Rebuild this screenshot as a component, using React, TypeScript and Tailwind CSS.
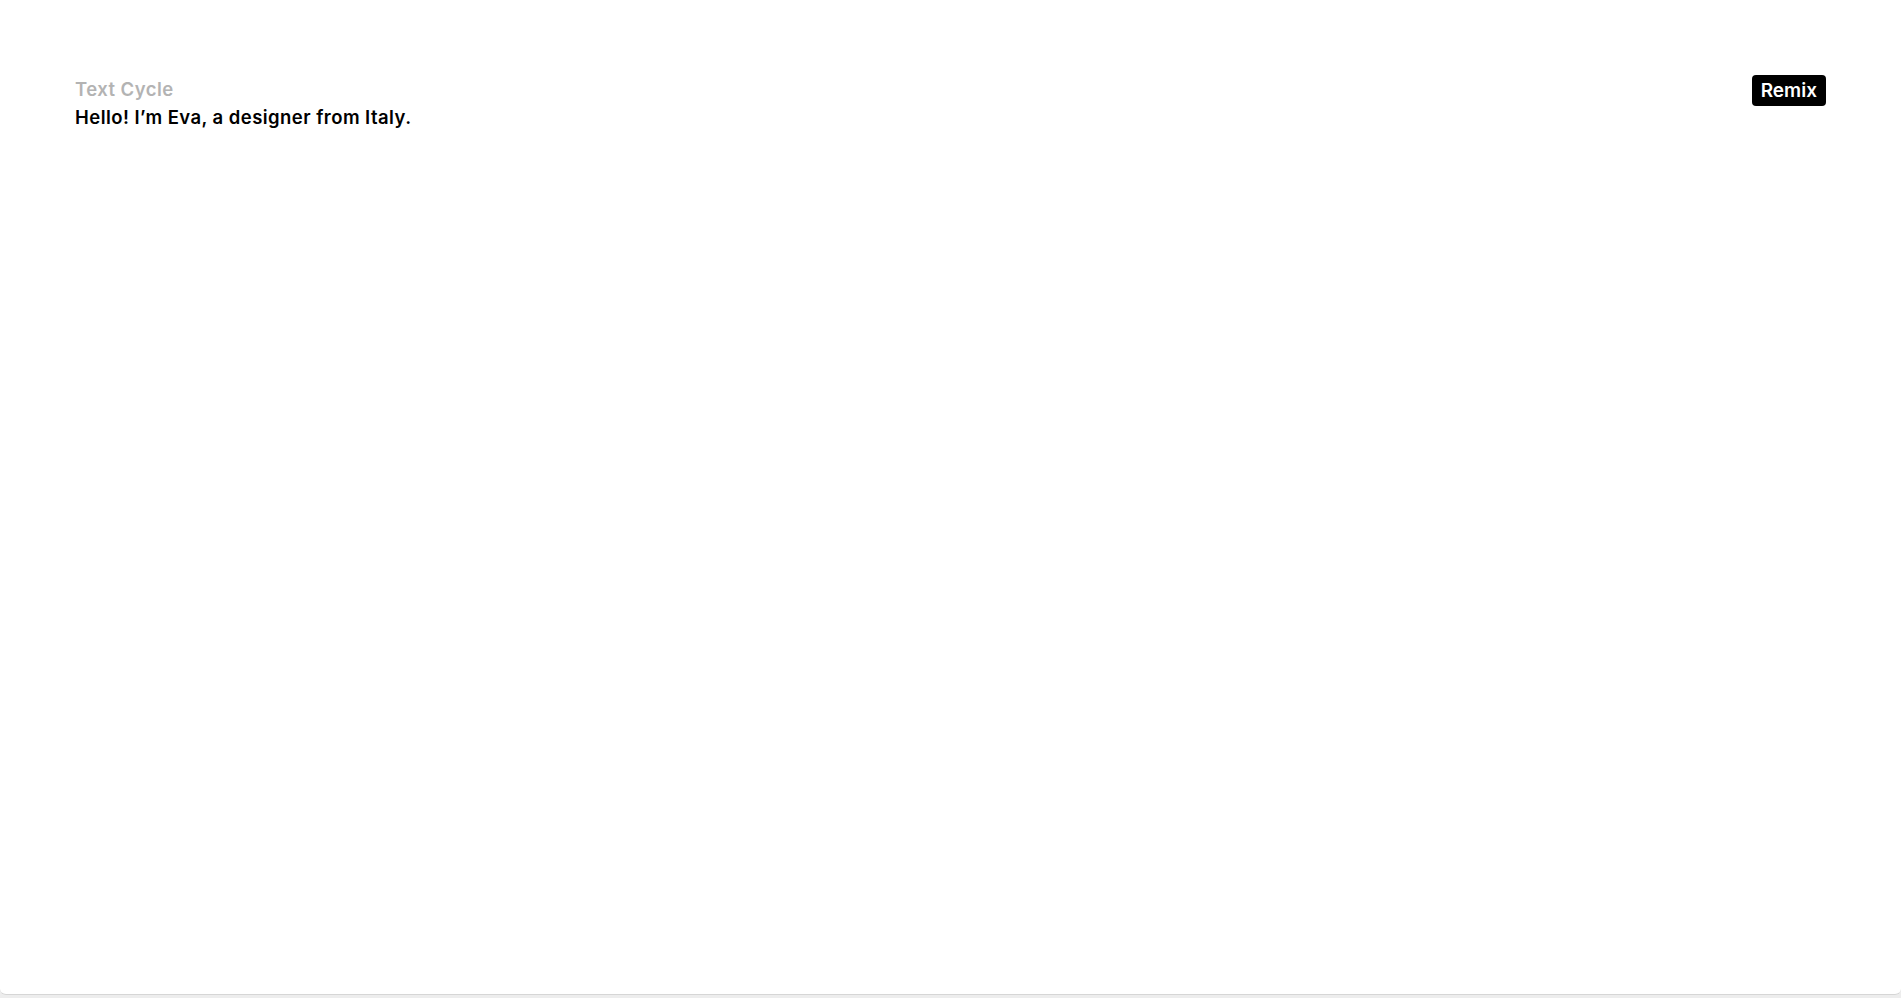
import React from 'react';

const App = () => {
  return (
    <div className="h-[998px] w-full bg-[#ededed] overflow-hidden" style={{ fontFamily: 'Inter, "Noto Sans", sans-serif' }}>
      <div className="h-[995px] w-full bg-white rounded-b-[6px] border-b border-[#d6d6d6]">
        <div className="flex items-start justify-between px-[75px] pt-[75px]">
          <div className="flex flex-col pt-[1px]">
            <span className="text-[18.5px] leading-[26px] font-semibold text-[#b3b3b3] tracking-[0.45px]">Text Cycle</span>
            <span className="mt-[2px] text-[18.5px] leading-[26px] font-semibold text-black tracking-[0.45px]">
              Hello! I’m Eva, a designer from Italy.
            </span>
          </div>
          <button className="h-[31px] px-[9px] rounded-[4px] bg-black text-white text-[19px] leading-[31px] font-semibold">
            Remix
          </button>
        </div>
      </div>
    </div>
  );
};

export default App;
